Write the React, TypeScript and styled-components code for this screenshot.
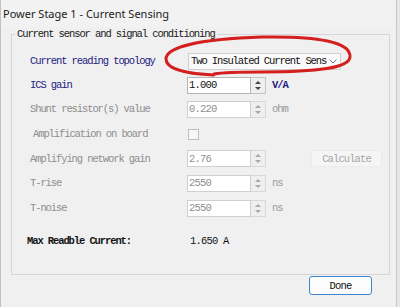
import React from 'react';
import styled, { createGlobalStyle } from 'styled-components';

const GlobalStyle = createGlobalStyle`
  html, body {
    margin: 0;
    padding: 0;
    background: #f0f0f0;
  }
  body {
    width: 400px;
    height: 307px;
    overflow: hidden;
  }
`;

const mono = `"Liberation Mono", "DejaVu Sans Mono", monospace`;

const Screen = styled.div`
  position: relative;
  display: flex;
  width: 400px;
  height: 307px;
  background: #e6e6e6;
`;

const DesktopEdge = styled.div`
  width: 2px;
  background: linear-gradient(
    to bottom,
    #a0a0a0 0 105px,
    #4f78c4 110px 150px,
    #d9b447 167px 213px,
    #b57cc4 217px 263px,
    #9a9a9a 270px
  );
`;

const Window = styled.div`
  flex: 1;
  display: flex;
  flex-direction: column;
  margin-right: 3px;
  background: #f0f0f0;
  border-left: 1px solid #c2c2c2;
  border-right: 1px solid #c8c8c8;
`;

const TitleBar = styled.div`
  height: 27px;
  display: flex;
  align-items: center;
  padding: 0 0 1px 2px;
  box-sizing: border-box;
  background: #f2f2f2;
  font-family: "Noto Sans", "Open Sans", sans-serif;
  font-size: 11px;
  color: #1b1b1b;
`;

const Body = styled.div`
  padding: 0 6px 0 10px;
`;

const Group = styled.fieldset`
  margin: 0;
  padding: 0;
  border: 1px solid #d6d6d6;
  min-width: 0;
`;

const GroupTitle = styled.legend`
  margin-left: 3px;
  padding: 0 2px;
  font-family: ${mono};
  font-size: 10.5px;
  letter-spacing: -1.1px;
  line-height: 14px;
  color: #1a1a1a;
`;

const Rows = styled.div`
  display: flex;
  flex-direction: column;
  padding: 8px 7px 21px 18px;
`;

const Row = styled.div<{ $h?: number; $gap?: number }>`
  display: flex;
  align-items: center;
  height: ${p => p.$h ?? 24}px;
  margin-top: ${p => p.$gap ?? 0}px;
`;

const Label = styled.span<{ $tone?: 'blue' | 'grey' | 'dark'; $indent?: number }>`
  flex: none;
  margin-left: ${p => p.$indent ?? 0}px;
  width: ${p => 157 - (p.$indent ?? 0)}px;
  font-family: ${mono};
  font-size: 10.5px;
  letter-spacing: -1.1px;
  white-space: nowrap;
  font-weight: ${p => (p.$tone === 'dark' ? 700 : 400)};
  color: ${p => (p.$tone === 'blue' ? '#1c1c80' : p.$tone === 'grey' ? '#8e8e8e' : '#141414')};
`;

const Combo = styled.div`
  margin-left: 1px;
  width: 153px;
  height: 17px;
  box-sizing: border-box;
  display: flex;
  align-items: center;
  justify-content: space-between;
  padding: 0 3px 0 2px;
  background: #fafafa;
  border: 1px solid #cfcfcf;
  font-family: ${mono};
  font-size: 10.5px;
  letter-spacing: -1.1px;
  color: #111;
`;

const Chevron = styled.svg`
  width: 8px;
  height: 5px;
`;

const Spin = styled.div`
  display: flex;
  height: 17px;
`;

const SpinInput = styled.div<{ $disabled?: boolean }>`
  width: 64px;
  box-sizing: border-box;
  display: flex;
  align-items: center;
  padding-left: 1px;
  background: #fff;
  border: 1px solid ${p => (p.$disabled ? '#cfcfcf' : '#b4b4b4')};
  font-family: ${mono};
  font-size: 10.5px;
  letter-spacing: -0.8px;
  color: ${p => (p.$disabled ? '#8e8e8e' : '#111')};
`;

const SpinButtons = styled.div<{ $disabled?: boolean }>`
  width: 14px;
  display: flex;
  flex-direction: column;
  align-items: center;
  justify-content: center;
  gap: 3px;
  background: #efefef;
  border: 1px solid ${p => (p.$disabled ? '#d8d8d8' : '#c4c4c4')};
  border-left: none;
`;

const Arrow = styled.span<{ $up?: boolean; $disabled?: boolean }>`
  width: 0;
  height: 0;
  border-left: 3px solid transparent;
  border-right: 3px solid transparent;
  ${p => (p.$up ? 'border-bottom' : 'border-top')}: 3px solid ${p => (p.$disabled ? '#a8a8a8' : '#444')};
`;

const Unit = styled.span<{ $blue?: boolean }>`
  margin-left: 6px;
  font-family: ${mono};
  font-size: 10.5px;
  letter-spacing: -1.1px;
  font-weight: ${p => (p.$blue ? 700 : 400)};
  color: ${p => (p.$blue ? '#1c1c80' : '#9a9a9a')};
`;

const Check = styled.span`
  margin-left: 1px;
  width: 11px;
  height: 11px;
  box-sizing: border-box;
  border: 1px solid #bdbdbd;
  background: #f7f7f7;
`;

const FlatButton = styled.button`
  margin-left: 45px;
  width: 71px;
  height: 17px;
  padding: 0;
  border: 1px solid #ececec;
  background: #f5f5f5;
  font-family: ${mono};
  font-size: 10.5px;
  letter-spacing: -0.9px;
  color: #a5a5a5;
`;

const Value = styled.span`
  padding-left: 3px;
  font-family: ${mono};
  font-size: 10.5px;
  letter-spacing: -0.8px;
  color: #141414;
`;

const Footer = styled.div`
  display: flex;
  justify-content: flex-end;
  padding: 1px 18px 0 0;
`;

const DoneButton = styled.button`
  width: 63px;
  height: 19px;
  padding: 0;
  border: 1px solid #3d86cf;
  border-radius: 3px;
  background: #fdfdfd;
  font-family: ${mono};
  font-size: 10.5px;
  letter-spacing: -0.8px;
  color: #111;
`;

const Annotation = styled.svg`
  position: absolute;
  left: 0;
  top: 0;
  width: 400px;
  height: 307px;
  pointer-events: none;
`;

const SpinBox: React.FC<{ value: string; disabled?: boolean }> = ({ value, disabled }) => (
  <Spin>
    <SpinInput $disabled={disabled}>{value}</SpinInput>
    <SpinButtons $disabled={disabled}>
      <Arrow $up $disabled={disabled} />
      <Arrow $disabled={disabled} />
    </SpinButtons>
  </Spin>
);

export default function App() {
  return (
    <Screen>
      <GlobalStyle />
      <DesktopEdge />
      <Window>
        <TitleBar>Power Stage 1 - Current Sensing</TitleBar>
        <Body>
          <Group>
            <GroupTitle>Current sensor and signal conditioning</GroupTitle>
            <Rows>
              <Row>
                <Label $tone="blue">Current reading topology</Label>
                <Combo>
                  <span>Two Insulated Current Sens</span>
                  <Chevron viewBox="0 0 8 5">
                    <path d="M0.5 0.5 L4 4 L7.5 0.5" fill="none" stroke="#666" strokeWidth="0.9" />
                  </Chevron>
                </Combo>
              </Row>
              <Row>
                <Label $tone="blue">ICS gain</Label>
                <SpinBox value="1.000" />
                <Unit $blue>V/A</Unit>
              </Row>
              <Row>
                <Label $tone="grey">Shunt resistor(s) value</Label>
                <SpinBox value="0.220" disabled />
                <Unit>ohm</Unit>
              </Row>
              <Row $h={26}>
                <Label $tone="grey" $indent={3}>Amplification on board</Label>
                <Check />
              </Row>
              <Row $h={23}>
                <Label $tone="grey">Amplifying network gain</Label>
                <SpinBox value="2.76" disabled />
                <FlatButton disabled>Calculate</FlatButton>
              </Row>
              <Row $h={26}>
                <Label $tone="grey">T-rise</Label>
                <SpinBox value="2550" disabled />
                <Unit>ns</Unit>
              </Row>
              <Row>
                <Label $tone="grey">T-noise</Label>
                <SpinBox value="2550" disabled />
                <Unit>ns</Unit>
              </Row>
              <Row $gap={9}>
                <Label $tone="dark" $indent={-3}>Max Readble Current:</Label>
                <Value>1.650 A</Value>
              </Row>
            </Rows>
          </Group>
          <Footer>
            <DoneButton>Done</DoneButton>
          </Footer>
        </Body>
      </Window>
      <Annotation viewBox="0 0 400 307">
        <path
          d="M214 75 C190 74 166 70 166 59 C166 47 200 39 262 37 C318 36 351 42 350 57 C349 68 318 72 262 72 C240 72 226 72 214 74"
          fill="none"
          stroke="#d41f1f"
          strokeWidth="3"
          strokeLinecap="round"
        />
      </Annotation>
    </Screen>
  );
}
